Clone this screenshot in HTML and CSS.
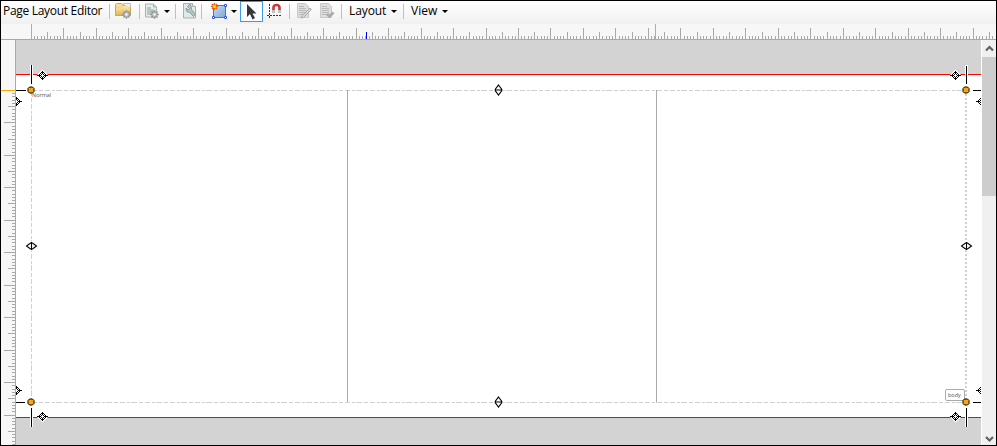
FILE: index.html
```html
<!DOCTYPE html>
<html lang="en">
<head>
<meta charset="utf-8">
<title>Page Layout Editor</title>
<link rel="stylesheet" href="styles.css">
</head>
<body>
<svg class="defs" width="0" height="0">
  <defs>
    <linearGradient id="folder-fill" x2="0" y2="1"><stop stop-color="#fbe7ad"/><stop offset="1" stop-color="#e2b653"/></linearGradient>
    <linearGradient id="frame-fill" x2="1" y2="1"><stop stop-color="#c7dcf1"/><stop offset="1" stop-color="#7da7d9"/></linearGradient>
    <g id="gear">
      <path d="M0-5V5M-5 0H5M-3.5-3.5L3.5 3.5M-3.5 3.5L3.5-3.5" stroke="#8d9093" stroke-width="1.8"/>
      <circle r="3.2" fill="#c5c8ca" stroke="#8d9093"/><circle r="1.2" fill="#fff"/>
    </g>
    <g id="sheet">
      <path d="M.5.5H8.5L11.500 3.500V13.500H.5Z" fill="#e6eeeb" stroke="#a5b3ae"/>
      <path d="M8.500.5V3.500H11.500" fill="none" stroke="#a5b3ae"/>
      <path d="M2 4.500H6M2 6.500H9M2 8.500H9M2 10.500H7" stroke="#8ba09a"/>
    </g>
    <g id="grey-sheet">
      <path d="M.5.5H8.500L11.500 3.500V14.500H.5Z" fill="#dedede" stroke="#c9c9c9"/>
      <path d="M2 3.500H7M2 5.500H9M2 7.500H9M2 9.500H9M2 11.500H7" stroke="#bababa"/>
    </g>
    <g id="target">
      <path d="M0-6L6 0L0 6L-6 0Z" fill="#fff"/>
      <path shape-rendering="crispEdges" d="M-.5-4.500h1v3h-1zM-.5 1.500h1v3h-1zM-4.500-.5h3v1h-3zM1.500-.5h3v1h-3zM-1.500-3.500h1v1h-1zM.5-3.500h1v1h-1zM-2.500-2.500h1v1h-1zM1.500-2.500h1v1h-1zM-3.500-1.500h1v1h-1zM2.500-1.500h1v1h-1zM-3.500.5h1v1h-1zM2.500.5h1v1h-1zM-2.500 1.500h1v1h-1zM1.500 1.500h1v1h-1zM-1.500 2.500h1v1h-1zM.5 2.500h1v1h-1zM-5.500-.5h1v1h-1zM4.500-.5h1v1h-1zM-1.500-1.500h1v1h-1zM.5-1.500h1v1h-1zM-1.500.5h1v1h-1zM.5.5h1v1h-1z"/>
    </g>
    <g id="stretch">
      <path d="M0-5.500L3.500 0L0 5.500L-3.500 0Z" fill="#fff" stroke="#fff" stroke-width="2"/>
      <path d="M0-5L3 -1V1L0 5L-3 1V-1ZM-4 0H4" fill="#fff" stroke="#000" stroke-width="1.100"/>
    </g>
    <path id="knob" d="M-1.500-3H1.500L3-1.500V1.500L1.500 3H-1.500L-3 1.500V-1.500Z" fill="#ffa500" stroke="#000"/>
  </defs>
</svg>
<main class="editor">
  <header class="toolbar">
    <span class="title">Page Layout Editor</span>
    <i class="sep"></i>
    <svg class="icon folder" width="18" height="18"><path d="M.5 14.500V3.500L1.500 2.500H6.500L8 4.500H15.500V14.500Z" fill="url(#folder-fill)" stroke="#cfa64d"/><path d="M8.500 4V2.500H15.500V6" fill="#eef3f5" stroke="#b5c4c9"/><path d="M1 7H7L8.500 5.500H15V14H1Z" fill="url(#folder-fill)"/><use href="#gear" transform="translate(11.500 13.500) scale(.85)"/></svg>
    <i class="sep"></i>
    <svg class="icon page" width="17" height="18"><use href="#sheet" x="0" y="2.500"/><use href="#gear" transform="translate(9.500 13.500) scale(.85)"/></svg>
    <i class="caret"></i>
    <i class="sep"></i>
    <svg class="icon wrench" width="14" height="18"><path d="M.5 2.500H9.500L12.500 5.500V17H.5Z" fill="#dfe9e7" stroke="#a5b3ae"/><path d="M9.500 2.500V5.500H12.500" fill="#fff" stroke="#a5b3ae"/><path d="M3 7L5 9L6.500 7.500L4.500 5.500Q8-.0 8.500 8.500L12.500 13.500L10.500 15.500L6.500 11Q3 12 3 7Z" fill="#b9c3c6" stroke="#7d8b90" stroke-width=".8"/></svg>
    <i class="sep"></i>
    <svg class="icon frame" width="17" height="18"><path d="M2.500 4.500H14.500V16.500H2.500Z" fill="url(#frame-fill)" stroke="#4a76bd"/><path d="M1.500 15.500h2v2h-2zM13.500 15.500h2v2h-2zM13.500 3.500h2v2h-2z" fill="#fff" stroke="#3355dd"/><path d="M3.500 2V9M0 5.500H7M1 3L6 8M6 3L1 8" stroke="#f05a0c" stroke-width="1.400"/><circle cx="3.500" cy="5.500" r="1.700" fill="#ffd21c"/></svg>
    <i class="caret"></i>
    <span class="tool-active"><svg width="12" height="16"><path d="M1 0V13L4 10L6.500 15.500L9 14L6.500 9.500H10.500Z" fill="#383838"/></svg></span>
    <svg class="icon magnet" width="15" height="18"><path d="M6.500 12V6.500Q6.500 4 9.500 4T12.500 6.500V12" fill="none" stroke="#c83838" stroke-width="2.600"/><path d="M5 10.500H8M11 10.500H14" stroke="#bcc3c8" stroke-width="3"/><path d="M2.500 3V17M0 14.500H14" stroke="#333" stroke-dasharray="2 1"/></svg>
    <i class="sep"></i>
    <svg class="icon edit" width="16" height="18"><use href="#grey-sheet" y="2"/><path d="M4.500 15L13 7L14.500 8.500L6.500 16.500L4 17Z" fill="#d2d2d2" stroke="#b0b0b0"/></svg>
    <svg class="icon check" width="16" height="18"><use href="#grey-sheet" y="2"/><path d="M7 13L9.500 15.500L13.500 11.500" fill="none" stroke="#aaa" stroke-width="2.600"/></svg>
    <i class="sep"></i>
    <span class="menu layout">Layout</span><i class="caret"></i>
    <i class="sep"></i>
    <span class="menu view">View</span><i class="caret"></i>
  </header>
  <svg class="ruler-top" viewBox="1 24 995 15"><path id="ticks-x" class="ticks"/><path class="zero" d="M31 24h1v15h-1zM655 24h1v15h-1z"/><path class="cursor" d="M366 32h1v8h-1z"/></svg>
  <section class="workspace">
    <svg class="ruler-left" viewBox="1 40 14 405"><path id="ticks-y" class="ticks"/><path class="zero" d="M1 90h14v1h-14z"/></svg>
    <svg class="canvas" viewBox="16 40 966 405">
      <path fill="#fff" d="M16 75H982V417H16Z"/>
      <path class="margin" d="M16 74.500H982M16 417.500H982"/>
      <path class="bounds" d="M31 90.500H966M31 402.500H966M31.500 90V402"/>
      <path class="bounds right" d="M966 90V402"/>
      <path class="columns" d="M347.500 90V402M656.500 90V402"/>
      <path d="M30 65H33V84H30ZM965 65H968V84H965ZM30 408H33V427H30ZM965 408H968V427H965Z" fill="#fff"/>
      <path class="marks" d="M31.500 65V84M966.500 66V84M31.500 408V427M966.500 408V427M16 90.500H26M973 90.500H981M16 402.500H25M973 402.500H981"/>
      <text x="32" y="97">Normal</text>
      <rect x="945.500" y="389.500" width="19" height="11" rx="1.500" fill="#fff" stroke="#aaa"/>
      <text x="948" y="397">body</text>
      <use href="#target" x="42.500" y="75.500"/><use href="#target" x="955.500" y="75.500"/>
      <use href="#target" x="42.500" y="416.500"/><use href="#target" x="955.500" y="416.500"/>
      <use href="#target" x="16.500" y="101.500"/><use href="#target" x="981.500" y="101.500"/>
      <use href="#target" x="16.500" y="390.500"/><use href="#target" x="981.500" y="390.500"/>
      <use href="#stretch" x="498.500" y="90"/><use href="#stretch" x="498.500" y="402"/>
      <use href="#stretch" transform="translate(31.500 246) rotate(90)"/><use href="#stretch" transform="translate(966.500 246) rotate(90)"/>
      <use href="#knob" x="31" y="90"/><use href="#knob" x="966" y="90"/><use href="#knob" x="31" y="402"/><use href="#knob" x="966" y="402"/>
      <path fill="#fff" d="M981 40h1v405h-1z"/>
    </svg>
    <div class="scrollbar">
      <svg width="14" height="17"><path d="M4 10.500L7.500 7L11 10.500"/></svg>
      <div class="thumb"></div>
      <svg class="down" width="14" height="14"><path d="M4 6L7.500 9.500L11 6"/></svg>
    </div>
  </section>
</main>
<script src="rulers.js"></script>
</body>
</html>
```
FILE: styles.css
```css
* { box-sizing: border-box; }
body { margin: 0; overflow: hidden; }
.defs { position: absolute; }
.editor {
  width: 997px;
  height: 446px;
  border: 1px solid #000;
  display: flex;
  flex-direction: column;
  background: #d3d3d3;
  font: 12px "Open Sans", sans-serif;
  color: #000;
}
.toolbar {
  height: 23px;
  flex: none;
  display: flex;
  align-items: flex-start;
  background: linear-gradient(#fff, #f0f0f0);
  line-height: 20px;
  white-space: nowrap;
}
.title { width: 106px; padding-left: 2px; letter-spacing: -0.3px; margin-right: 2px; }
.sep { width: 1px; height: 15px; margin-top: 3px; background: #c0c0c0; flex: none; }
.icon { flex: none; }
.folder { margin: 0 6px 0 5px; }
.page { margin: 0 2px 0 5px; }
.caret {
  flex: none;
  margin: 9px 4px 0 0;
  border: 3px solid transparent;
  border-top-color: #000;
  border-bottom: 0;
}
.page + .caret { margin-right: 5px; }
.wrench { margin: 0 4px 0 7px; }
.frame { margin: 0 3px 0 9px; }
.frame + .caret { margin-right: 3px; }
.tool-active {
  width: 23px;
  height: 21px;
  border: 1px solid #3f9ae5;
  background: #fafcff;
  padding: 2px 0 0 5px;
  flex: none;
}
.tool-active svg { display: block; }
.magnet { margin: 0 7px 0 4px; }
.edit { margin: 0 7px; }
.check { margin-right: 5px; }
.menu { flex: none; }
.layout { width: 49px; padding-left: 7px; letter-spacing: -0.1px; }
.layout + .caret { margin-right: 6px; }
.view { width: 38px; padding-left: 7px; }
.ruler-top {
  display: block;
  flex: none;
  width: 995px;
  height: 16px;
  background: #f7f7f7;
  border-bottom: 1px solid #a9a9a9;
}
.workspace { display: grid; grid-template-columns: 15px 966px 14px; height: 405px; }
.ruler-left { display: block; width: 15px; height: 405px; background: #f7f7f7; border-right: 1px solid #a9a9a9; }
.ticks { fill: #a9a9a9; }
.zero { fill: #ffa500; }
.cursor { fill: #00f; }
.canvas { display: block; width: 966px; height: 405px; }
.canvas text { font: 5.5px "Open Sans", sans-serif; fill: #555; }
.margin { stroke: #f00; }
.bounds { stroke: #d0d0d0; stroke-dasharray: 6 2 4 2 5 2 3 1; fill: none; }
.bounds.right { stroke-width: 2; stroke-dasharray: 2 2; }
.columns { stroke: #aaa; }
.marks { stroke: #000; }
.scrollbar { display: flex; flex-direction: column; background: #f0f0f0; }
.scrollbar svg { display: block; flex: none; fill: none; stroke: #606060; stroke-width: 2.2; }
.thumb { height: 139px; background: #cdcdcd; }
.down { margin-top: auto; }
```
FILE: rulers.js
```js
// Ruler scale: ten divisions per unit.
const unit = 32.48;
const size = n => (n % 10 === 0 ? 11 : n % 5 === 0 ? 7 : 3);

let across = '';
for (let n = 1; n < 297; n++) {
  const x = Math.floor(31.3 + n * unit / 10);
  across += `M${x} ${39 - size(n)}h1v${size(n)}h-1z`;
}
document.getElementById('ticks-x').setAttribute('d', across);

let down = '';
for (let n = 1; n < 110; n++) {
  const y = Math.floor(90.3 + n * unit / 10);
  down += `M${15 - size(n)} ${y}h${size(n)}v1h-${size(n)}z`;
}
document.getElementById('ticks-y').setAttribute('d', down);
```
